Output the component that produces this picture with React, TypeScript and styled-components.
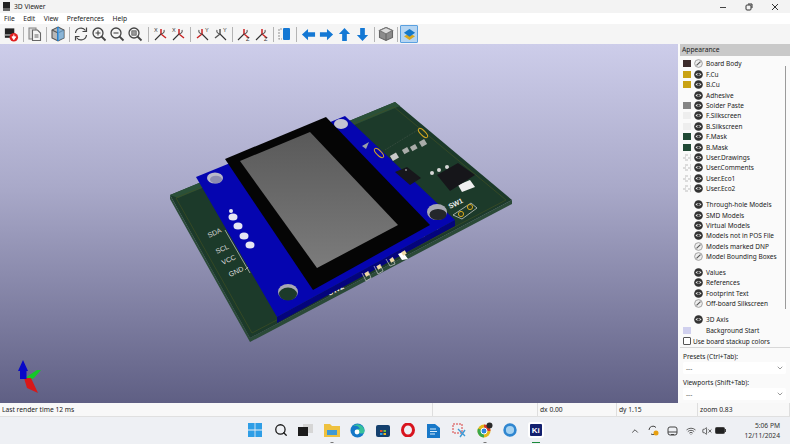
import React from 'react';
import styled, { createGlobalStyle } from 'styled-components';
import { ChevronDown, ChevronUp, Search, VolumeX, Wifi } from 'lucide-react';

interface LayerRow {
  label: string;
  swatch?: string;
  eye?: 'on' | 'off' | 'none';
  gap?: boolean;
}

const GlobalStyle = createGlobalStyle`
  html, body {
    margin: 0;
    padding: 0;
    background: #fff;
  }
  body {
    font-family: "Noto Sans", "Open Sans", sans-serif;
    font-size: 6.7px;
    color: #222;
  }
`;

const Window = styled.div`
  width: 790px;
  height: 444px;
  display: flex;
  flex-direction: column;
  overflow: hidden;
`;

const TitleBar = styled.div`
  height: 13px;
  flex: none;
  background: #f3f3f3;
  display: flex;
  align-items: center;
  padding-left: 3px;
  font-size: 6.7px;
`;

const TitleText = styled.span`
  margin-left: 4px;
  flex: 1;
`;

const WindowControls = styled.div`
  display: flex;
  align-items: center;
  gap: 18px;
  padding-right: 11px;
`;

const MenuBar = styled.div`
  height: 11px;
  flex: none;
  background: #fff;
  display: flex;
  align-items: center;
  padding-left: 4px;
  gap: 8.5px;
  font-size: 6.7px;
`;

const Toolbar = styled.div`
  height: 20px;
  flex: none;
  background: #f5f5f5;
  display: flex;
  align-items: center;
  padding-left: 2px;
`;

const ToolButton = styled.div<{ $active?: boolean }>`
  width: 18px;
  height: 18px;
  box-sizing: border-box;
  display: flex;
  align-items: center;
  justify-content: center;
  background: ${(p) => (p.$active ? '#b5d5f2' : 'transparent')};
  border: 1px solid ${(p) => (p.$active ? '#5aa0e0' : 'transparent')};
  border-radius: 1px;
`;

const ToolSep = styled.div<{ $w: number }>`
  width: ${(p) => p.$w}px;
  height: 15px;
  display: flex;
  justify-content: center;
  &::after {
    content: '';
    width: 1px;
    background: #b4b4b4;
  }
`;

const Main = styled.div`
  height: 359px;
  flex: none;
  display: flex;
`;

const Canvas = styled.div`
  width: 678px;
  background: linear-gradient(#cdcdea 0%, #a9a9c9 40%, #5f5f84 100%);
`;

const CanvasSvg = styled.svg`
  display: block;
  width: 678px;
  height: 359px;
`;

const Panel = styled.div`
  flex: 1;
  background: #fafafa;
  padding-left: 2px;
  display: flex;
  flex-direction: column;
  min-width: 0;
`;

const PanelHeader = styled.div`
  height: 12px;
  line-height: 12px;
  background: #c9c9c9;
  padding-left: 2px;
  font-size: 6.7px;
`;

const LayerList = styled.div`
  position: relative;
  padding-top: 2.8px;
  padding-left: 3px;
  height: 279px;
  box-sizing: border-box;
  &::after {
    content: '';
    position: absolute;
    right: 4px;
    top: 10px;
    width: 1px;
    height: 243px;
    background: #9a9a9a;
  }
`;

const Row = styled.div<{ $gap?: boolean }>`
  height: 10.4px;
  margin-top: ${(p) => (p.$gap ? '5.6px' : '0')};
  display: flex;
  align-items: center;
  white-space: nowrap;
  font-size: 6.5px;
`;

const Swatch = styled.div<{ $color?: string; $check?: boolean }>`
  width: 8px;
  height: 7px;
  margin-right: 3px;
  flex: none;
  background: ${(p) =>
    p.$check
      ? 'repeating-conic-gradient(#dcdcdc 0 25%, #fafafa 0 50%) 0 0 / 5px 5px'
      : p.$color || 'transparent'};
`;

const EyeSlot = styled.div`
  width: 9px;
  height: 9px;
  margin-right: 3px;
  flex: none;
  display: flex;
  align-items: center;
`;

const StackupRow = styled.label`
  height: 12px;
  display: flex;
  align-items: center;
  padding-left: 3px;
  gap: 2px;
  font-size: 6.5px;
  white-space: nowrap;
  border-bottom: 1px solid #d8d8d8;
`;

const Check = styled.div`
  width: 6px;
  height: 6px;
  border: 1px solid #555;
  border-radius: 1px;
  background: #fff;
`;

const FieldLabel = styled.div`
  padding-left: 3px;
  margin-top: 3px;
  height: 11px;
  line-height: 11px;
  font-size: 6.5px;
`;

const Select = styled.div`
  margin: 0 4px 0 3px;
  height: 12px;
  background: #fff;
  border-radius: 2px;
  display: flex;
  align-items: center;
  justify-content: space-between;
  padding: 0 2px 0 3px;
  font-size: 6.5px;
  color: #555;
`;

const StatusBar = styled.div`
  height: 14px;
  flex: none;
  background: #f8f8f8;
  border-bottom: 1px solid #e0e0e0;
  box-sizing: border-box;
  display: flex;
  font-size: 6.7px;
`;

const StatusField = styled.div<{ $w: number }>`
  width: ${(p) => p.$w}px;
  flex: none;
  padding-left: 2px;
  box-sizing: border-box;
  border-right: 1px solid #dedede;
  line-height: 13px;
  white-space: nowrap;
`;

const Taskbar = styled.div`
  flex: 1;
  background: #eef0f4;
  position: relative;
  display: flex;
  align-items: center;
  padding-bottom: 1px;
`;

const TaskIcons = styled.div`
  margin-left: 242.5px;
  display: flex;
`;

const TaskIcon = styled.div<{ $mark?: 'dot' | 'active' }>`
  width: 25.5px;
  height: 25px;
  position: relative;
  display: flex;
  align-items: center;
  justify-content: center;
  &::after {
    content: '';
    display: ${(p) => (p.$mark ? 'block' : 'none')};
    position: absolute;
    left: 50%;
    bottom: 0;
    transform: translateX(-50%);
    width: ${(p) => (p.$mark === 'active' ? '8px' : '3px')};
    height: 1px;
    background: ${(p) => (p.$mark === 'active' ? '#1a8a3a' : '#777')};
  }
`;

const KicadTile = styled.div`
  width: 16px;
  height: 16px;
  background: #13206e;
  border: 2px solid #fff;
  border-radius: 3px;
  box-sizing: border-box;
  color: #fff;
  font: bold 8px "Liberation Sans", sans-serif;
  display: flex;
  align-items: center;
  justify-content: center;
`;

const Tray = styled.div`
  position: absolute;
  right: 10px;
  top: 0;
  bottom: 0;
  display: flex;
  align-items: center;
`;

const TrayIcon = styled.div<{ $w: number }>`
  width: ${(p) => p.$w}px;
  display: flex;
  justify-content: center;
  align-items: center;
`;

const Clock = styled.div`
  margin-left: 17px;
  text-align: right;
  font-size: 6.7px;
  line-height: 10px;
  color: #333;
`;

const LAYERS: LayerRow[] = [
  { label: 'Board Body', swatch: '#3b2b2b', eye: 'off' },
  { label: 'F.Cu', swatch: '#c9a214', eye: 'on' },
  { label: 'B.Cu', swatch: '#c9a214', eye: 'on' },
  { label: 'Adhesive', eye: 'on' },
  { label: 'Solder Paste', swatch: '#858585', eye: 'on' },
  { label: 'F.Silkscreen', swatch: '#eeeeee', eye: 'on' },
  { label: 'B.Silkscreen', swatch: '#eeeeee', eye: 'on' },
  { label: 'F.Mask', swatch: '#214a36', eye: 'on' },
  { label: 'B.Mask', swatch: '#214a36', eye: 'on' },
  { label: 'User.Drawings', swatch: 'check', eye: 'on' },
  { label: 'User.Comments', swatch: 'check', eye: 'on' },
  { label: 'User.Eco1', swatch: 'check', eye: 'on' },
  { label: 'User.Eco2', swatch: 'check', eye: 'on' },
  { label: 'Through-hole Models', eye: 'on', gap: true },
  { label: 'SMD Models', eye: 'on' },
  { label: 'Virtual Models', eye: 'on' },
  { label: 'Models not in POS File', eye: 'on' },
  { label: 'Models marked DNP', eye: 'off' },
  { label: 'Model Bounding Boxes', eye: 'off' },
  { label: 'Values', eye: 'on', gap: true },
  { label: 'References', eye: 'on' },
  { label: 'Footprint Text', eye: 'on' },
  { label: 'Off-board Silkscreen', eye: 'off' },
  { label: '3D Axis', eye: 'on', gap: true },
  { label: 'Background Start', swatch: '#d0d0ee', eye: 'none' },
];

const EyeIcon = () => (
  <svg width="9" height="9" viewBox="0 0 10 10">
    <circle cx="5" cy="5" r="4.8" fill="#333" />
    <path d="M1.6 5 Q5 1.8 8.4 5 Q5 8.2 1.6 5Z" fill="#e8e8e8" />
    <circle cx="5" cy="5" r="1.4" fill="#333" />
  </svg>
);

const OffIcon = () => (
  <svg width="9" height="9" viewBox="0 0 10 10">
    <circle cx="5" cy="5" r="4.3" fill="#eee" stroke="#999" strokeWidth="1" />
    <path d="M2.8 7.2 L7.2 2.8" stroke="#555" strokeWidth="1.2" />
  </svg>
);

const Icon = ({ children }: { children: React.ReactNode }) => (
  <svg width="16" height="16" viewBox="0 0 16 16" fill="none" stroke="#444" strokeWidth="1.1">
    {children}
  </svg>
);

const AxisIcon = ({ top, bottom, color, flip }: { top: string; bottom: string; color: string; flip?: boolean }) => (
  <Icon>
    <g transform={flip ? 'translate(16 0) scale(-1 1)' : undefined}>
      <path d="M2 14 L8 8" stroke="#333" />
      <path d="M8 8 L8 3" stroke={color} strokeWidth="1.5" />
      <path d="M8 8 L13 12" stroke={color} strokeWidth="1.5" />
      <path d="M8 8 Q12 7 11 4" stroke="#555" />
    </g>
    <text x={flip ? 11 : 1} y="6" fontSize="5.5" fill="#333" stroke="none" fontFamily="Liberation Sans">{top}</text>
    <text x="10" y="15" fontSize="5.5" fill="#333" stroke="none" fontFamily="Liberation Sans">{bottom}</text>
  </Icon>
);

const ArrowIcon = ({ rotate }: { rotate: number }) => (
  <svg width="15" height="15" viewBox="0 0 16 16">
    <path
      transform={`rotate(${rotate} 8 8)`}
      d="M1 8 L7.5 2 L7.5 5.5 L15 5.5 L15 10.5 L7.5 10.5 L7.5 14 Z"
      fill="#1478d4"
    />
  </svg>
);

const TOOLS: (React.ReactNode | number)[] = [
  <svg key="export" width="17" height="17" viewBox="0 0 17 17">
    <rect x="2" y="2" width="10" height="10" fill="#222" />
    <rect x="2" y="8" width="10" height="2" fill="#888" />
    <circle cx="11.5" cy="11.5" r="4.5" fill="#e02020" />
    <path d="M11.5 8.5 V12 M9.5 11 L11.5 14 L13.5 11Z" stroke="#fff" fill="#fff" />
  </svg>,
  6,
  <Icon key="copy">
    <rect x="2" y="2" width="7" height="11" fill="#ddd" stroke="#888" />
    <path d="M5.5 4 H10.5 L13.5 7 V14.5 H5.5Z" fill="#f5f5f5" stroke="#666" />
    <path d="M7.5 9 H11.5 M7.5 11 H11.5" stroke="#666" />
  </Icon>,
  5,
  <Icon key="cube">
    <path d="M8 1 L14 4 V12 L8 15 L2 12 V4Z" fill="#b8b8b8" stroke="#555" />
    <path d="M2 4 L8 7 L14 4 M8 7 V15" stroke="#555" />
    <path d="M8 1 V15" stroke="#1a80d8" strokeWidth="1.6" />
    <path d="M8 2 L14 4.5 V12 L8 14.5Z" fill="#6cb2ea" opacity="0.6" stroke="none" />
  </Icon>,
  5,
  <Icon key="refresh">
    <path d="M2.5 7 A5.5 5.5 0 0 1 12.5 4.5" strokeWidth="1.2" />
    <path d="M13.5 1.5 V5.5 H9.5" strokeWidth="1.2" />
    <path d="M13.5 9 A5.5 5.5 0 0 1 3.5 11.5" strokeWidth="1.2" />
    <path d="M2.5 14.5 V10.5 H6.5" strokeWidth="1.2" />
  </Icon>,
  <Icon key="zin">
    <circle cx="7" cy="7" r="5" strokeWidth="1.3" />
    <path d="M10.5 10.5 L14.5 14.5" strokeWidth="1.8" />
    <path d="M4.5 7 H9.5 M7 4.5 V9.5" />
  </Icon>,
  <Icon key="zout">
    <circle cx="7" cy="7" r="5" strokeWidth="1.3" />
    <path d="M10.5 10.5 L14.5 14.5" strokeWidth="1.8" />
    <path d="M4.5 7 H9.5" />
  </Icon>,
  <Icon key="zfit">
    <circle cx="7" cy="7" r="5" strokeWidth="1.3" />
    <path d="M10.5 10.5 L14.5 14.5" strokeWidth="1.8" />
    <rect x="4.8" y="4.8" width="4.4" height="4.4" fill="#999" stroke="#555" strokeWidth="0.7" />
  </Icon>,
  8,
  <AxisIcon key="x1" top="X" bottom="" color="#c82020" />,
  <AxisIcon key="x2" top="X" bottom="" color="#c82020" />,
  5,
  <AxisIcon key="y1" top="Y" bottom="" color="#c82020" flip />,
  <AxisIcon key="y2" top="Y" bottom="" color="#555" flip />,
  6,
  <AxisIcon key="z1" top="" bottom="Z" color="#c82020" />,
  <AxisIcon key="z2" top="" bottom="Z" color="#c82020" />,
  4,
  <Icon key="flip">
    <rect x="7" y="2" width="7" height="12" rx="1" fill="#1478d4" stroke="none" />
    <path d="M6 3 H3 V13 H6" stroke="#999" strokeDasharray="2 1" />
  </Icon>,
  6,
  <ArrowIcon key="left" rotate={0} />,
  <ArrowIcon key="right" rotate={180} />,
  <ArrowIcon key="up" rotate={90} />,
  <ArrowIcon key="down" rotate={270} />,
  6,
  <Icon key="ortho">
    <path d="M8 1.5 L14.5 4.5 V11.5 L8 14.5 L1.5 11.5 V4.5Z" fill="#8c8c8c" stroke="#666" />
    <path d="M8 1.5 L14.5 4.5 L8 8 L1.5 4.5Z" fill="#dcdcdc" stroke="#777" />
    <path d="M8 8 V14.5" stroke="#666" />
  </Icon>,
  5,
];

const Board = () => (
  <CanvasSvg viewBox="0 44 678 359">
    {/* pcb */}
    <path d="M170 195 L170 199 L250 342 L512 204 L512 200 L250 338Z" fill="#2b4a38" />
    <path d="M170 195 L395 102 L512 200 L250 338Z" fill="#1c3a2a" />
    <path d="M170 195 L395 102 L400 106 L178 198Z" fill="#2a5038" />
    <path d="M176 198 L394 107 L506 200 L252 333Z" fill="none" stroke="#3f4f24" strokeWidth="0.7" />

    {/* silkscreen */}
    <g fill="#d8d8d8" fontFamily="Liberation Sans" fontSize="7">
      <text x="209" y="238" transform="rotate(-25 209 238)">SDA</text>
      <text x="217" y="254" transform="rotate(-25 217 254)">SCL</text>
      <text x="223" y="265" transform="rotate(-25 223 265)">VCC</text>
      <text x="230" y="277" transform="rotate(-25 230 277)">GND</text>
      <text x="329" y="296" fontSize="8" fontWeight="bold" fill="#eee" transform="rotate(-27 329 296)">SW2</text>
      <text x="450" y="209" fontWeight="bold" fill="#eee" transform="rotate(-27 450 209)">SW1</text>
      <text x="424" y="241" transform="rotate(-27 424 241)">1</text>
      <text x="438" y="234" transform="rotate(-27 438 234)">2</text>
    </g>
    <path d="M225 230 L250 273" stroke="#ccc" strokeWidth="0.7" />
    <path d="M245 270 L248 267" stroke="#ccc" strokeWidth="0.7" />

    {/* display module */}
    <path d="M277 317 L277 323 L455 226 L455 220Z" fill="#04047c" />
    <path d="M196 177 L345 116 L455 220 L277 317Z" fill="#0505b0" />
    <ellipse cx="215" cy="178" rx="8" ry="5.5" fill="#b9b9c9" />
    <ellipse cx="216" cy="179.5" rx="6" ry="3.8" fill="#8c8cb0" />
    <ellipse cx="341" cy="124" rx="7" ry="5" fill="#c4c4d2" />
    <ellipse cx="288" cy="292" rx="10" ry="8" fill="#a8a8b4" />
    <ellipse cx="288" cy="294" rx="9" ry="6.5" fill="#1c3a2a" />
    <ellipse cx="437" cy="212" rx="10" ry="8" fill="#a8a8b4" />
    <ellipse cx="438" cy="214.5" rx="8.5" ry="5.5" fill="#24272b" />
    <path d="M225 159 L326 117 L430 225 L313 290Z" fill="#050505" />
    <path d="M240 161 L310 132 L398 225 L317 268Z" fill="url(#glass)" />
    <path d="M362 146 L369 142 L366 149Z" fill="#9aa0a8" />

    <g fill="#e6e6f4">
      <ellipse cx="231" cy="211" rx="2" ry="2" />
      <ellipse cx="233" cy="217" rx="4.5" ry="3.6" />
      <ellipse cx="238" cy="226" rx="4.5" ry="3.6" />
      <ellipse cx="244" cy="236" rx="4.5" ry="3.6" />
      <ellipse cx="250" cy="245" rx="4.5" ry="3.6" />
    </g>

    {/* parts on the pcb */}
    <path d="M385 150 L421 128" stroke="#4d5a50" strokeWidth="0.6" strokeDasharray="1 1" />
    <g fill="none" stroke="#d4a820" strokeWidth="1">
      <ellipse cx="379" cy="153" rx="6" ry="2.4" transform="rotate(45 379 153)" />
      <ellipse cx="423" cy="133" rx="6" ry="2.4" transform="rotate(45 423 133)" />
    </g>
    <g fill="#c8cac8">
      <rect x="391" y="154" width="7" height="6" transform="rotate(-30 394 157)" />
      <rect x="403" y="148" width="6" height="5" fill="#a9aca9" transform="rotate(-30 406 151)" />
      <rect x="411" y="145" width="6" height="5" fill="#a9aca9" transform="rotate(-30 414 148)" />
      <rect x="420" y="140" width="6" height="6" fill="#a9aca9" transform="rotate(-30 423 143)" />
    </g>
    <path d="M395 172 L407 167 L421 178 L410 185Z" fill="#17171b" />
    <circle cx="406" cy="170" r="0.8" fill="#ddd" />
    <g fill="#d6d6d6">
      <circle cx="432" cy="173" r="2" />
      <circle cx="439" cy="170" r="2" />
      <circle cx="447" cy="167" r="2" />
    </g>
    <path d="M458 185 L470 180 L475 187 L462 192Z" fill="#efefef" />
    <path d="M437 175 L458 163 L475 175 L450 191Z" fill="#16161a" />
    <g>
      <path d="M453 215 L471 203 L477 208 L462 219Z" fill="none" stroke="#ddd" strokeWidth="0.7" />
      <circle cx="461" cy="214" r="2.6" fill="#2b3a22" stroke="#d4a820" />
      <circle cx="470" cy="207" r="2.6" fill="#2b3a22" stroke="#d4a820" />
    </g>
    <g fill="none" stroke="#ccc" strokeWidth="0.7">
      <path d="M362 273 L366 281 L371 278 L368 271" />
      <path d="M374 266 L378 274 L383 271 L380 264" />
      <path d="M386 259 L390 266 L395 264 L392 257" />
    </g>
    <path d="M398 254 L403 252 L408 259 L402 260Z" fill="#fff" />
    <g fill="#f0d9a6">
      <rect x="365" y="272" width="4" height="4" transform="rotate(-27 367 274)" />
      <rect x="377" y="265" width="4" height="4" transform="rotate(-27 379 267)" />
      <rect x="390" y="258" width="4" height="4" transform="rotate(-27 392 260)" />
      <rect x="402" y="251" width="4" height="4" transform="rotate(-27 404 253)" />
    </g>

    <defs>
      <linearGradient id="glass" x1="0" y1="0" x2="0" y2="1">
        <stop offset="0" stopColor="#595959" />
        <stop offset="1" stopColor="#7c7c7c" />
      </linearGradient>
    </defs>

    {/* axis gizmo */}
    <path d="M25 378 L37 370 L41 370 L34 378 L28 381Z" fill="#14c828" />
    <path d="M24 378 L31 378 L38 393 L27 388Z" fill="#d81818" />
    <path d="M23 360 L28 371 L26.5 371 L26.5 379 L20 379 L20 371 L18 371Z" fill="#0808c8" />
  </CanvasSvg>
);

const TASK_ICONS: { key: string; mark?: 'dot' | 'active'; icon: React.ReactNode }[] = [
  {
    key: 'start',
    icon: (
      <svg width="14" height="14" viewBox="0 0 14 14">
        <path d="M0 0 H6.6 V6.6 H0Z M7.4 0 H14 V6.6 H7.4Z M0 7.4 H6.6 V14 H0Z M7.4 7.4 H14 V14 H7.4Z" fill="#2f9ee6" />
      </svg>
    ),
  },
  { key: 'search', icon: <Search size={14} color="#1a1a1a" strokeWidth={2.2} /> },
  {
    key: 'tasks',
    icon: (
      <svg width="16" height="12" viewBox="0 0 16 12">
        <rect x="5" y="0" width="10" height="9" fill="#d6d6d6" />
        <rect x="0" y="3" width="10" height="9" fill="#1c1c1c" />
      </svg>
    ),
  },
  {
    key: 'files',
    mark: 'dot',
    icon: (
      <svg width="16" height="14" viewBox="0 0 16 14">
        <path d="M0 1 H6 L8 3 H16 V14 H0Z" fill="#eec13f" />
        <rect x="3" y="7" width="10" height="5" fill="#3f9ad6" />
      </svg>
    ),
  },
  {
    key: 'edge',
    icon: (
      <svg width="15" height="15" viewBox="0 0 15 15">
        <circle cx="7.5" cy="7.5" r="7" fill="#1478c8" />
        <path d="M14.5 8 A7 7 0 0 0 3 3 Q8 1.5 10 6 Q8 5 6 7 Q7 12 14 10Z" fill="#37c19a" />
        <circle cx="7" cy="9" r="2.4" fill="#fff" />
      </svg>
    ),
  },
  {
    key: 'store',
    icon: (
      <svg width="14" height="14" viewBox="0 0 14 14">
        <rect x="0" y="2" width="14" height="12" rx="2" fill="#14406e" />
        <path d="M4 7 H6.5 V9 H4Z" fill="#e24a28" />
        <path d="M7.5 7 H10 V9 H7.5Z" fill="#6ebe3c" />
        <path d="M4 10 H6.5 V12 H4Z" fill="#2f9ee6" />
        <path d="M7.5 10 H10 V12 H7.5Z" fill="#f0b81e" />
      </svg>
    ),
  },
  {
    key: 'opera',
    icon: (
      <svg width="14" height="14" viewBox="0 0 14 14">
        <ellipse cx="7" cy="7" rx="5.5" ry="6" fill="none" stroke="#d8141e" strokeWidth="3" />
      </svg>
    ),
  },
  {
    key: 'doc',
    icon: (
      <svg width="13" height="15" viewBox="0 0 13 15">
        <path d="M0 1 H8 L13 5 V15 H0Z" fill="#1878c8" />
        <path d="M3 6 H9 M3 8.5 H10 M3 11 H8" stroke="#d8ecfa" />
      </svg>
    ),
  },
  {
    key: 'snip',
    icon: (
      <svg width="15" height="15" viewBox="0 0 15 15" fill="none">
        <rect x="1" y="1" width="9" height="9" stroke="#d84040" strokeDasharray="2 1" />
        <path d="M6 6 L13 13 M13 7 L8 14" stroke="#3f9ad6" strokeWidth="1.4" />
      </svg>
    ),
  },
  {
    key: 'chrome',
    mark: 'dot',
    icon: (
      <svg width="16" height="16" viewBox="0 0 16 16">
        <circle cx="7" cy="9" r="6.5" fill="#e2b91c" />
        <path d="M7 2.5 A6.5 6.5 0 0 1 13.5 9 L7 9Z" fill="#d83a2a" />
        <path d="M7 15.5 A6.5 6.5 0 0 1 1 6.5 L7 9Z" fill="#3aa84a" />
        <circle cx="7" cy="9" r="3" fill="#2f86e0" stroke="#fff" />
        <circle cx="12.5" cy="3.5" r="3" fill="#2a2a2a" />
      </svg>
    ),
  },
  {
    key: 'ring',
    icon: (
      <svg width="14" height="14" viewBox="0 0 14 14">
        <circle cx="7" cy="7" r="5.4" fill="#a6d2f0" stroke="#2f86d0" strokeWidth="2.6" />
      </svg>
    ),
  },
  { key: 'kicad', mark: 'active', icon: <KicadTile>Ki</KicadTile> },
];

const App: React.FC = () => {
  return (
    <Window>
      <GlobalStyle />
      <TitleBar>
        <svg width="7" height="9" viewBox="0 0 7 9">
          <rect width="7" height="6" fill="#222" />
          <rect y="6" width="7" height="3" fill="#666" />
        </svg>
        <TitleText>3D Viewer</TitleText>
        <WindowControls>
          <svg width="8" height="8" viewBox="0 0 8 8">
            <path d="M1 4.5 H7" stroke="#444" strokeWidth="1" />
          </svg>
          <svg width="8" height="8" viewBox="0 0 8 8" fill="none" stroke="#333">
            <rect x="1" y="2" width="5" height="5" rx="1" />
            <path d="M3 1 H7 V5" />
          </svg>
          <svg width="8" height="8" viewBox="0 0 8 8">
            <path d="M1 1 L7 7 M7 1 L1 7" stroke="#333" />
          </svg>
        </WindowControls>
      </TitleBar>
      <MenuBar>
        <span>File</span>
        <span>Edit</span>
        <span>View</span>
        <span>Preferences</span>
        <span>Help</span>
      </MenuBar>
      <Toolbar>
        {TOOLS.map((tool, i) =>
          typeof tool === 'number' ? <ToolSep key={i} $w={tool} /> : <ToolButton key={i}>{tool}</ToolButton>
        )}
        <ToolButton $active>
          <svg width="13" height="13" viewBox="0 0 14 14">
            <path d="M7 6 L13 9 L7 13 L1 9Z" fill="#d8a820" />
            <path d="M7 1 L13 5 L7 9.5 L1 5Z" fill="#1478c8" />
          </svg>
        </ToolButton>
      </Toolbar>
      <Main>
        <Canvas>
          <Board />
        </Canvas>
        <Panel>
          <PanelHeader>Appearance</PanelHeader>
          <LayerList>
            {LAYERS.map((layer) => (
              <Row key={layer.label} $gap={layer.gap}>
                <Swatch $check={layer.swatch === 'check'} $color={layer.swatch} />
                <EyeSlot>
                  {layer.eye === 'on' && <EyeIcon />}
                  {layer.eye === 'off' && <OffIcon />}
                </EyeSlot>
                {layer.label}
              </Row>
            ))}
          </LayerList>
          <StackupRow>
            <Check />
            Use board stackup colors
          </StackupRow>
          <FieldLabel>Presets (Ctrl+Tab):</FieldLabel>
          <Select>
            ---
            <ChevronDown size={8} color="#666" />
          </Select>
          <FieldLabel>Viewports (Shift+Tab):</FieldLabel>
          <Select>
            ---
            <ChevronDown size={8} color="#666" />
          </Select>
        </Panel>
      </Main>
      <StatusBar>
        <StatusField $w={433}>Last render time 12 ms</StatusField>
        <StatusField $w={105} />
        <StatusField $w={79}>dx 0.00</StatusField>
        <StatusField $w={81}>dy 1.15</StatusField>
        <StatusField $w={92}>zoom 0.83</StatusField>
      </StatusBar>
      <Taskbar>
        <TaskIcons>
          {TASK_ICONS.map((item) => (
            <TaskIcon key={item.key} $mark={item.mark}>
              {item.icon}
            </TaskIcon>
          ))}
        </TaskIcons>
        <Tray>
          <TrayIcon $w={18}>
            <ChevronUp size={10} color="#333" />
          </TrayIcon>
          <TrayIcon $w={19}>
            <svg width="11" height="11" viewBox="0 0 11 11" fill="none">
              <path d="M1 5 A4 4 0 0 1 8 2.5 M9 6 A4 4 0 0 1 3 9" stroke="#444" />
              <circle cx="8" cy="8" r="2.5" fill="#e8a010" />
            </svg>
          </TrayIcon>
          <TrayIcon $w={19}>
            <svg width="11" height="10" viewBox="0 0 11 10" fill="none" stroke="#444">
              <rect x="1" y="1" width="9" height="8" rx="2" />
              <path d="M1 6 H10 M4 8.5 H7" />
            </svg>
          </TrayIcon>
          <TrayIcon $w={18}>
            <Wifi size={10} color="#444" />
          </TrayIcon>
          <TrayIcon $w={13}>
            <VolumeX size={10} color="#444" />
          </TrayIcon>
          <TrayIcon $w={14}>
            <svg width="11" height="7" viewBox="0 0 11 7">
              <rect x="0.5" y="0.5" width="9" height="6" rx="1" fill="#222" stroke="#444" />
              <rect x="10" y="2" width="1" height="3" fill="#444" />
            </svg>
          </TrayIcon>
          <Clock>
            <div>5:06 PM</div>
            <div>12/11/2024</div>
          </Clock>
        </Tray>
      </Taskbar>
    </Window>
  );
};

export default App;
